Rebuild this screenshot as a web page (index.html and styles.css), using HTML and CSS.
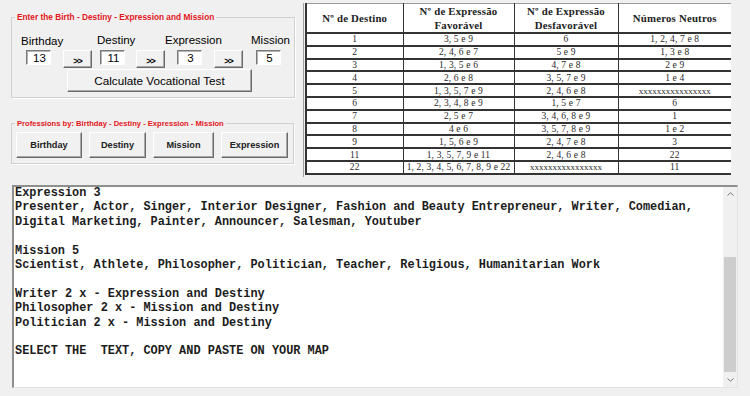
FILE: index.html
```html
<!DOCTYPE html>
<html lang="en">
<head>
    <meta charset="UTF-8">
    <meta name="viewport" content="width=device-width, initial-scale=1.0">
    <title>Vocational Test</title>
    <link rel="stylesheet" href="styles.css">
</head>
<body>

    <div class="top">
        <div class="left">
            <fieldset class="group group-enter">
                <legend>Enter the Birth - Destiny - Expression and Mission</legend>
                <div class="labels">
                    <span class="lbl lbl-birth">Birthday</span>
                    <span class="lbl">Destiny</span>
                    <span class="lbl">Expression</span>
                    <span class="lbl">Mission</span>
                </div>
                <div class="inputs">
                    <input class="num" type="text" value="13">
                    <div class="button arrow">&gt;&gt;</div>
                    <input class="num" type="text" value="11">
                    <div class="button arrow">&gt;&gt;</div>
                    <input class="num" type="text" value="3">
                    <div class="button arrow">&gt;&gt;</div>
                    <input class="num" type="text" value="5">
                </div>
                <div class="button calc">Calculate Vocational Test</div>
            </fieldset>

            <fieldset class="group group-prof">
                <legend>Professions by: Birthday - Destiny - Expression - Mission</legend>
                <div class="prof-buttons">
                    <div class="button prof">Birthday</div>
                    <div class="button prof">Destiny</div>
                    <div class="button prof">Mission</div>
                    <div class="button prof">Expression</div>
                </div>
            </fieldset>
        </div>

        <div class="table-box">
            <table class="numbers">
                <colgroup>
                    <col class="c1"><col class="c2"><col class="c3"><col class="c4">
                </colgroup>
                <tr class="head">
                    <th>Nº de Destino</th>
                    <th>Nº de Expressão<br>Favorável</th>
                    <th>Nº de Expressão<br>Desfavorável</th>
                    <th>Números Neutros</th>
                </tr>
                <tr><td>1</td><td>3, 5 e 9</td><td>6</td><td>1, 2, 4, 7 e 8</td></tr>
                <tr><td>2</td><td>2, 4, 6 e 7</td><td>5 e 9</td><td>1, 3 e 8</td></tr>
                <tr><td>3</td><td>1, 3, 5 e 6</td><td>4, 7 e 8</td><td>2 e 9</td></tr>
                <tr><td>4</td><td>2, 6 e 8</td><td>3, 5, 7 e 9</td><td>1 e 4</td></tr>
                <tr><td>5</td><td>1, 3, 5, 7 e 9</td><td>2, 4, 6 e 8</td><td class="xx">xxxxxxxxxxxxxxxx</td></tr>
                <tr><td>6</td><td>2, 3, 4, 8 e 9</td><td>1, 5 e 7</td><td>6</td></tr>
                <tr><td>7</td><td>2, 5 e 7</td><td>3, 4, 6, 8 e 9</td><td>1</td></tr>
                <tr><td>8</td><td>4 e 6</td><td>3, 5, 7, 8 e 9</td><td>1 e 2</td></tr>
                <tr><td>9</td><td>1, 5, 6 e 9</td><td>2, 4, 7 e 8</td><td>3</td></tr>
                <tr><td>11</td><td>1, 3, 5, 7, 9 e 11</td><td>2, 4, 6 e 8</td><td>22</td></tr>
                <tr><td>22</td><td>1, 2, 3, 4, 5, 6, 7, 8, 9 e 22</td><td class="xx">xxxxxxxxxxxxxxxx</td><td>11</td></tr>
            </table>
        </div>
    </div>

    <div class="memo">
<pre class="memo-text">Expression 3
Presenter, Actor, Singer, Interior Designer, Fashion and Beauty Entrepreneur, Writer, Comedian,
Digital Marketing, Painter, Announcer, Salesman, Youtuber

Mission 5
Scientist, Athlete, Philosopher, Politician, Teacher, Religious, Humanitarian Work

Writer 2 x - Expression and Destiny
Philosopher 2 x - Mission and Destiny
Politician 2 x - Mission and Destiny

SELECT THE  TEXT, COPY AND PASTE ON YOUR MAP</pre>
        <div class="scrollbar">
            <div class="sb-arrow">
                <svg width="7" height="4" viewBox="0 0 7 4"><path d="M0.5 3.5 L3.5 0.8 L6.5 3.5" fill="none" stroke="#777" stroke-width="1"/></svg>
            </div>
            <div class="sb-track">
                <div class="sb-thumb"></div>
            </div>
            <div class="sb-arrow">
                <svg width="7" height="4" viewBox="0 0 7 4"><path d="M0.5 0.5 L3.5 3.2 L6.5 0.5" fill="none" stroke="#777" stroke-width="1"/></svg>
            </div>
        </div>
    </div>

</body>
</html>
```

FILE: styles.css
```css
body {
    margin: 0;
    background-color: #f0f0f0;
    font-family: "Liberation Sans", Arial, sans-serif;
    color: #000;
}
.top {
    display: flex;
    height: 185px;
}
.left {
    width: 292px;
    padding: 12px 0 0 11px;
}

/* group boxes */
.group {
    margin: 0;
    border: 1px solid #d0d0d0;
    box-shadow: 1px 1px 0 #fff;
}
.group legend {
    margin-left: 3px;
    padding: 0 2px;
    color: #e3161d;
    font-weight: bold;
}
.group-enter {
    width: 284px;
    box-sizing: border-box;
    padding: 12px 0 5px 0;
}
.group-enter legend {
    font-size: 8.3px;
    line-height: 10px;
}
.group-prof {
    width: 283px;
    box-sizing: border-box;
    margin-top: 21px;
    padding: 4px 0 5px 0;
}
.group-prof legend {
    font-size: 7.6px;
    line-height: 9px;
}

.labels {
    display: grid;
    grid-template-columns: 76px 68px 86px auto;
    padding-left: 9px;
    font-size: 11.5px;
    line-height: 13px;
}
.lbl-birth {
    padding-top: 1px;
}
.inputs {
    display: grid;
    grid-template-columns: 37px 37px 36px 41px 37px 42px 25px;
    align-items: start;
    padding-left: 14px;
    margin-top: 2px;
    height: 18px;
}
.num {
    box-sizing: border-box;
    width: 25px;
    height: 15px;
    margin: 0;
    padding: 0 0 0 2px;
    border: 1px solid;
    border-color: #7a7a7a #fff #fff #7a7a7a;
    box-shadow: inset 1px 1px 0 #b4b4b4;
    background-color: #fff;
    font-family: "Liberation Sans", Arial, sans-serif;
    font-size: 11.5px;
    text-align: center;
    color: #000;
}

/* buttons */
.button {
    box-sizing: border-box;
    display: flex;
    justify-content: center;
    align-items: center;
    background-color: #f1f1f1;
    border: 1px solid;
    border-color: #fff #6b6b6b #6b6b6b #fff;
    box-shadow: inset -1px -1px 0 #a8a8a8;
    cursor: pointer;
    user-select: none;
}
.arrow {
    width: 29px;
    height: 18px;
    padding-top: 3px;
    font-size: 9px;
    font-weight: bold;
    letter-spacing: -1px;
}
.calc {
    width: 185px;
    height: 23px;
    margin: 1px 0 0 55px;
    font-size: 11.7px;
}
.prof-buttons {
    display: grid;
    grid-template-columns: 66px 57px 61px 67px;
    column-gap: 7px;
    padding-left: 4px;
}
.prof {
    height: 26px;
    font-size: 9.2px;
    font-weight: bold;
    color: #222;
}

/* destiny table */
.table-box {
    margin-top: 3px;
    height: 174px;
    border-left: 1px solid #a0a0a0;
    padding-left: 1px;
}
.numbers {
    width: 425px;
    border-collapse: collapse;
    background-color: #fff;
    table-layout: fixed;
    font-family: "Liberation Serif", "Times New Roman", serif;
    color: #2a2a2a;
    border-top: 1px solid #9a9a9a;
    border-left: 2px solid #333;
    border-right: none;
}
.c1 { width: 97px; }
.c2 { width: 111px; }
.c3 { width: 104px; }
.c4 { width: 113px; }
.numbers th {
    height: 28px;
    padding: 0;
    font-size: 10.8px;
    line-height: 14px;
    letter-spacing: 0.2px;
    font-weight: bold;
    color: #222;
    border-left: 1px solid #333;
    border-bottom: 2px solid #333;
}
.numbers td {
    height: 10.8px;
    padding: 0;
    font-size: 9.5px;
    line-height: 10px;
    letter-spacing: 0.15px;
    text-align: center;
    border-left: 1px solid #333;
    border-bottom: 2px solid #333;
}
.numbers td.xx {
    font-size: 9px;
    letter-spacing: 0;
}

/* results memo */
.memo {
    display: flex;
    height: 203px;
    margin: 0 12px;
    box-sizing: border-box;
    background-color: #fff;
    border-top: 2px solid #8f8f8f;
    border-left: 2px solid #8f8f8f;
    border-right: 1px solid #e3e3e3;
    border-bottom: 1px solid #e3e3e3;
}
.memo-text {
    flex: 1;
    margin: -1px 0 0 0;
    padding-left: 1px;
    font-family: "Liberation Mono", "Courier New", monospace;
    font-size: 11.9px;
    line-height: 14.4px;
    font-weight: bold;
    color: #1c1c1c;
    overflow: hidden;
}
.scrollbar {
    width: 14px;
    display: flex;
    flex-direction: column;
    background-color: #f0f0f0;
}
.sb-arrow {
    height: 14px;
    display: flex;
    justify-content: center;
    align-items: center;
}
.sb-track {
    flex: 1;
    padding-top: 56px;
}
.sb-thumb {
    height: 115px;
    margin: 0 1px;
    background-color: #cdcdcd;
}
```
